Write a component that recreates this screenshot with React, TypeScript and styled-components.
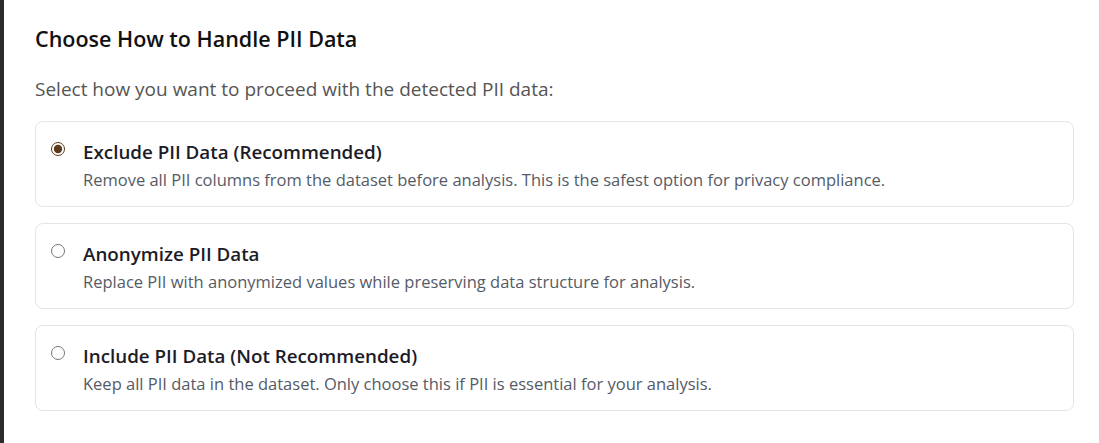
import React, { useState } from "react";
import styled, { createGlobalStyle } from "styled-components";

const GlobalStyle = createGlobalStyle`
  html, body { margin: 0; padding: 0; background: #2b2b2b; }
  body { font-family: "Open Sans", "Noto Sans", Arial, sans-serif; }
  * { box-sizing: border-box; }
`;

const Page = styled.div`
  display: flex;
  min-height: 443px;
  background: #2b2b2b;
`;

const Backdrop = styled.div`
  width: 4px;
  flex: none;
  background: #2b2b2b;
`;

const Panel = styled.section`
  flex: 1;
  background: #ffffff;
  padding: 24px 25px 0 31px;
`;

const Title = styled.h2`
  margin: 0;
  font-size: 21.5px;
  line-height: 30px;
  font-weight: 600;
  color: #111111;
`;

const Subtitle = styled.p`
  margin: 22px 0 18px;
  font-size: 19px;
  line-height: 27px;
  color: #555555;
`;

const Options = styled.div`
  display: flex;
  flex-direction: column;
  gap: 16px;
`;

const Option = styled.label`
  display: flex;
  align-items: flex-start;
  gap: 18px;
  border: 1px solid #e5e5e5;
  border-radius: 8px;
  padding: 17px 17px 14px 15px;
  cursor: pointer;
  background: #fff;
`;

const Radio = styled.input`
  margin: 3px 0 0 0;
  width: 14px;
  height: 14px;
  flex: none;
  accent-color: #5c3a1c;
`;

const Text = styled.div`
  display: flex;
  flex-direction: column;
  gap: 2px;
`;

const OptionTitle = styled.span`
  font-size: 18.8px;
  line-height: 27px;
  font-weight: 600;
  color: #1c1c28;
`;

const OptionDesc = styled.span`
  font-size: 16.5px;
  line-height: 24px;
  color: #555b66;
`;

const options = [
  {
    id: "exclude",
    title: "Exclude PII Data (Recommended)",
    desc: "Remove all PII columns from the dataset before analysis. This is the safest option for privacy compliance.",
  },
  {
    id: "anonymize",
    title: "Anonymize PII Data",
    desc: "Replace PII with anonymized values while preserving data structure for analysis.",
  },
  {
    id: "include",
    title: "Include PII Data (Not Recommended)",
    desc: "Keep all PII data in the dataset. Only choose this if PII is essential for your analysis.",
  },
];

export default function App() {
  const [choice, setChoice] = useState("exclude");
  return (
    <>
      <GlobalStyle />
      <Page>
        <Backdrop />
        <Panel>
          <Title>Choose How to Handle PII Data</Title>
          <Subtitle>Select how you want to proceed with the detected PII data:</Subtitle>
          <Options>
            {options.map((o) => (
              <Option key={o.id}>
                <Radio
                  type="radio"
                  name="pii"
                  value={o.id}
                  checked={choice === o.id}
                  onChange={() => setChoice(o.id)}
                />
                <Text>
                  <OptionTitle>{o.title}</OptionTitle>
                  <OptionDesc>{o.desc}</OptionDesc>
                </Text>
              </Option>
            ))}
          </Options>
        </Panel>
      </Page>
    </>
  );
}
